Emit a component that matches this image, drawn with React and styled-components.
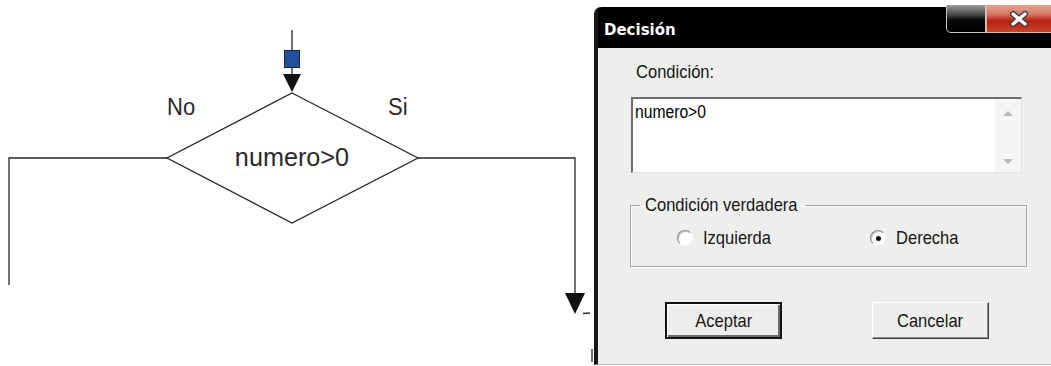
import React from "react";
import styled, { createGlobalStyle } from "styled-components";

const Global = createGlobalStyle`
	html, body {
		margin: 0;
		padding: 0;
		background: #fff;
		overflow: hidden;
	}
`;

const Page = styled.div`
	display: flex;
	align-items: flex-start;
	width: 1051px;
	height: 366px;
	overflow: hidden;
`;

const Canvas = styled.div`
	width: 594px;
	height: 366px;
	flex-shrink: 0;
`;

const Dialog = styled.div`
	display: flex;
	flex-direction: column;
	width: 457px;
	height: 358px;
	margin-top: 7px;
	flex-shrink: 0;
	border-left: 4px solid #161616;
	border-bottom: 1px solid #b9b9b9;
	border-top-left-radius: 7px;
	background: #eeefed;
	box-sizing: border-box;
`;

const TitleBar = styled.div`
	display: flex;
	align-items: center;
	height: 41px;
	flex-shrink: 0;
	background: #000;
	border-top-left-radius: 4px;
	padding-left: 6px;
	font-family: "DejaVu Sans", Verdana, sans-serif;
	font-weight: bold;
	font-size: 15px;
	color: #fff;
`;

const TitleText = styled.span`
	margin-top: 5px;
`;

const Controls = styled.div`
	display: flex;
	margin-left: auto;
	align-self: flex-start;
	margin-top: -2px;
`;

const MinBtn = styled.div`
	width: 38px;
	height: 27px;
	border: 1px solid #c8c8c8;
	border-top: none;
	border-bottom-left-radius: 5px;
	background: linear-gradient(#9a9a9a 0%, #4a4a4a 35%, #0a0a0a 55%, #000 100%);
`;

const CloseBtn = styled.div`
	display: flex;
	align-items: center;
	justify-content: center;
	width: 64px;
	height: 27px;
	border: 1px solid #e0b0a8;
	border-top: none;
	border-right: none;
	background: linear-gradient(#e4a598 0%, #d67565 35%, #b8200f 58%, #c9402c 100%);
`;

const Body = styled.div`
	display: flex;
	flex-direction: column;
	padding: 14px 0 0 33px;
	font-family: "Liberation Sans", Arial, sans-serif;
	font-size: 19px;
	color: #161616;
`;

/* the screenshot's text is narrow and tall */
const Narrow = styled.span`
	display: inline-block;
	white-space: nowrap;
	transform: scaleX(0.87);
	transform-origin: ${(p) => p.$origin || "left"} center;
`;

const Label = styled.div`
	height: 20px;
	line-height: 20px;
	margin-left: 5px;
`;

const TextBox = styled.div`
	display: flex;
	width: 391px;
	height: 76px;
	margin-top: 15px;
	box-sizing: border-box;
	border-top: 2px solid #6e6e6e;
	border-left: 2px solid #6e6e6e;
	border-right: 1px solid #e4e4e4;
	border-bottom: 1px solid #e4e4e4;
	background: #fff;
`;

const TextValue = styled.div`
	flex: 1;
	padding: 3px 0 0 2px;
	font-size: 18px;
	line-height: 20px;
	color: #000;
`;

const ScrollBar = styled.div`
	display: flex;
	flex-direction: column;
	justify-content: space-between;
	align-items: center;
	width: 26px;
	padding: 12px 0 8px;
	box-sizing: border-box;
	background: #f5f5f5;
`;

const Arrow = styled.div`
	width: 0;
	height: 0;
	border-left: 5px solid transparent;
	border-right: 5px solid transparent;
	${(p) =>
		p.$down
			? "border-top: 5px solid #b8b8b8;"
			: "border-bottom: 5px solid #b8b8b8;"}
`;

const Group = styled.fieldset`
	width: 397px;
	margin: 22px 0 0 -1px;
	padding: 13px 0 18px 0;
	box-sizing: border-box;
	border: 1px solid #a5a5a5;
	box-shadow: inset 1px 1px 0 #fbfbfb, 1px 1px 0 #fbfbfb;
	min-width: 0;
`;

const Legend = styled.legend`
	width: 165px;
	box-sizing: border-box;
	margin-left: 9px;
	padding: 0 0 0 5px;
	height: 20px;
	line-height: 20px;
`;

const RadioRow = styled.div`
	display: flex;
	height: 20px;
	align-items: center;
`;

const RadioItem = styled.div`
	display: flex;
	align-items: center;
	gap: 10px;
	width: ${(p) => p.$width || "auto"};
	padding-left: ${(p) => p.$pad || "0"};
	box-sizing: border-box;
`;

const RadioCircle = styled.span`
	display: flex;
	align-items: center;
	justify-content: center;
	flex-shrink: 0;
	width: 14px;
	height: 14px;
	border-radius: 50%;
	border: 1px solid;
	border-color: #8c8c8c #f6f6f6 #f6f6f6 #8c8c8c;
	background: #fff;
	box-shadow: inset 1px 1px 0 #c4c4c4;
	&::after {
		content: "";
		width: 5px;
		height: 5px;
		border-radius: 50%;
		background: ${(p) => (p.$checked ? "#111" : "transparent")};
	}
`;

const Buttons = styled.div`
	display: flex;
	gap: 90px;
	margin: 35px 0 0 34px;
`;

const Button = styled.div`
	display: flex;
	align-items: center;
	justify-content: center;
	width: 117px;
	height: 37px;
	box-sizing: border-box;
	background: #eeefed;
	border: 1px solid;
	border-color: #fff #404040 #404040 #fff;
	box-shadow: inset -1px -1px 0 #8a8a8a;
	${(p) =>
		p.$default &&
		`
		border: 2px solid #141414;
		box-shadow: inset 1px 1px 0 #fff, inset -2px -2px 0 #6a6a6a;
	`}
`;

const FlowChart = () => (
	<svg width="594" height="366" viewBox="0 0 594 366">
		<g stroke="#262626" strokeWidth="1.3" fill="none">
			<line x1="292" y1="30" x2="292" y2="50" />
			<line x1="292" y1="67" x2="292" y2="76" />
			<polygon points="292,93 418,158 292,223 167,158" />
			<polyline points="167,158 9,158 9,285" />
			<polyline points="418,158 575,158 575,296" />
			<line x1="583" y1="313.5" x2="590" y2="313" />
			<line x1="592" y1="349" x2="592" y2="362" />
		</g>
		<rect x="284.5" y="50.5" width="15" height="17" fill="#2150a0" stroke="#222" strokeWidth="1" />
		<polygon points="283,74 301,74 292,92" fill="#111" />
		<polygon points="565,293 585,293 575,314" fill="#111" />
		<g fontFamily="Liberation Sans, Arial, sans-serif" fill="#2a2a2a">
			<text x="167" y="115" fontSize="24" transform="translate(167 0) scale(0.92 1) translate(-167 0)">No</text>
			<text x="388" y="115" fontSize="24" transform="translate(388 0) scale(0.92 1) translate(-388 0)">Si</text>
			<text x="292" y="166" fontSize="26" textAnchor="middle" transform="translate(292 0) scale(0.97 1) translate(-292 0)">numero&gt;0</text>
		</g>
	</svg>
);

const CloseGlyph = () => (
	<svg width="22" height="16" viewBox="0 0 22 16">
		<path d="M5 3 L17 13 M17 3 L5 13" stroke="#3a3a3a" strokeWidth="6" strokeLinecap="round" />
		<path d="M5 3 L17 13 M17 3 L5 13" stroke="#fff" strokeWidth="3.4" strokeLinecap="round" />
	</svg>
);

export default function App() {
	return (
		<Page>
			<Global />
			<Canvas>
				<FlowChart />
			</Canvas>
			<Dialog>
				<TitleBar>
					<TitleText>Decisión</TitleText>
					<Controls>
						<MinBtn />
						<CloseBtn>
							<CloseGlyph />
						</CloseBtn>
					</Controls>
				</TitleBar>
				<Body>
					<Label>
						<Narrow>Condición:</Narrow>
					</Label>
					<TextBox>
						<TextValue>
							<Narrow>numero&gt;0</Narrow>
						</TextValue>
						<ScrollBar>
							<Arrow />
							<Arrow $down />
						</ScrollBar>
					</TextBox>
					<Group>
						<Legend>
							<Narrow>Condición verdadera</Narrow>
						</Legend>
						<RadioRow>
							<RadioItem $width="239px" $pad="46px">
								<RadioCircle />
								<Narrow>Izquierda</Narrow>
							</RadioItem>
							<RadioItem>
								<RadioCircle $checked />
								<Narrow>Derecha</Narrow>
							</RadioItem>
						</RadioRow>
					</Group>
					<Buttons>
						<Button $default>
							<Narrow $origin="center">Aceptar</Narrow>
						</Button>
						<Button>
							<Narrow $origin="center">Cancelar</Narrow>
						</Button>
					</Buttons>
				</Body>
			</Dialog>
		</Page>
	);
}
